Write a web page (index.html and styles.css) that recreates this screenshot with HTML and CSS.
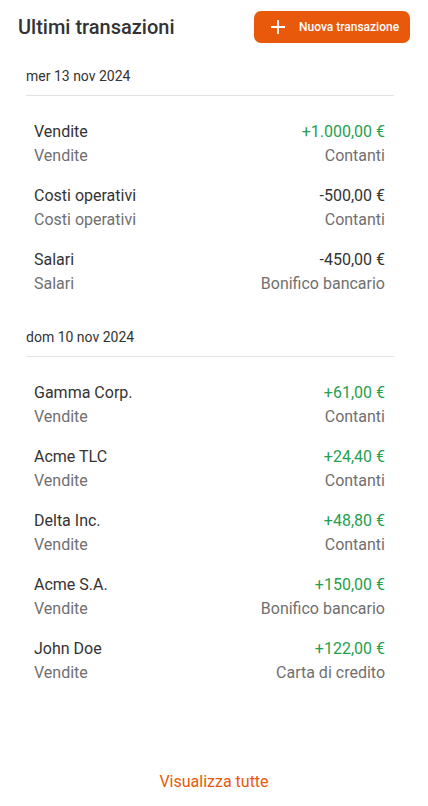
FILE: index.html
```html
<!DOCTYPE html>
<html lang="it">
<head>
<meta charset="utf-8">
<link rel="stylesheet" href="styles.css">
</head>
<body>
<div class="page">
  <header class="header">
    <h1 class="title">Ultimi transazioni</h1>
    <button class="new-btn">
      <svg class="plus" width="16" height="16" viewBox="0 0 16 16"><path d="M8 1v14M1 8h14" stroke="#fff" stroke-width="1.8" fill="none"/></svg>
      <span>Nuova transazione</span>
    </button>
  </header>

  <section class="group">
    <div class="date">mer 13 nov 2024</div>
    <div class="rows">
      <div class="row"><div class="line"><span class="main">Vendite</span><span class="amt pos">+1.000,00 €</span></div><div class="line sub"><span>Vendite</span><span>Contanti</span></div></div>
      <div class="row"><div class="line"><span class="main">Costi operativi</span><span class="amt">-500,00 €</span></div><div class="line sub"><span>Costi operativi</span><span>Contanti</span></div></div>
      <div class="row"><div class="line"><span class="main">Salari</span><span class="amt">-450,00 €</span></div><div class="line sub"><span>Salari</span><span>Bonifico bancario</span></div></div>
    </div>
  </section>

  <section class="group">
    <div class="date">dom 10 nov 2024</div>
    <div class="rows">
      <div class="row"><div class="line"><span class="main">Gamma Corp.</span><span class="amt pos">+61,00 €</span></div><div class="line sub"><span>Vendite</span><span>Contanti</span></div></div>
      <div class="row"><div class="line"><span class="main">Acme TLC</span><span class="amt pos">+24,40 €</span></div><div class="line sub"><span>Vendite</span><span>Contanti</span></div></div>
      <div class="row"><div class="line"><span class="main">Delta Inc.</span><span class="amt pos">+48,80 €</span></div><div class="line sub"><span>Vendite</span><span>Contanti</span></div></div>
      <div class="row"><div class="line"><span class="main">Acme S.A.</span><span class="amt pos">+150,00 €</span></div><div class="line sub"><span>Vendite</span><span>Bonifico bancario</span></div></div>
      <div class="row"><div class="line"><span class="main">John Doe</span><span class="amt pos">+122,00 €</span></div><div class="line sub"><span>Vendite</span><span>Carta di credito</span></div></div>
    </div>
  </section>

  <footer class="footer">
    <a class="all" href="#">Visualizza tutte</a>
  </footer>
</div>
</body>
</html>
```
FILE: styles.css
```css
html, body {
  margin: 0;
  padding: 0;
  background: #fff;
}
body {
  font-family: Roboto, "Liberation Sans", sans-serif;
  color: #333;
}
.page {
  width: 428px;
  min-height: 806px;
}
.header {
  display: flex;
  justify-content: space-between;
  align-items: center;
  padding: 11px 18px 0 18px;
}
.title {
  margin: 0;
  font-size: 20px;
  font-weight: 500;
  color: #333;
  line-height: 32px;
}
.new-btn {
  display: flex;
  align-items: center;
  gap: 13px;
  height: 32px;
  width: 156px;
  padding: 0 0 0 16px;
  border: none;
  border-radius: 7px;
  background: #e8590c;
  color: #fff;
  font-family: Roboto, "Liberation Sans", sans-serif;
  font-size: 12px;
  font-weight: 500;
}
.group {
  margin: 0 34px 0 26px;
}
.date {
  font-size: 14px;
  line-height: 20px;
  color: #333;
  padding: 23px 0 9px;
  border-bottom: 1px solid #e2e2e2;
}
.rows {
  padding-top: 16px;
}
.row {
  padding: 8px 9px 8px 8px;
}
.line {
  display: flex;
  justify-content: space-between;
  font-size: 16px;
  line-height: 24px;
  color: #333;
}
.line.sub {
  color: #707070;
}
.amt.pos {
  color: #25a04f;
}
.footer {
  text-align: center;
  padding-top: 77px;
}
.all {
  font-size: 16px;
  line-height: 24px;
  color: #e8590c;
  text-decoration: none;
}
```
